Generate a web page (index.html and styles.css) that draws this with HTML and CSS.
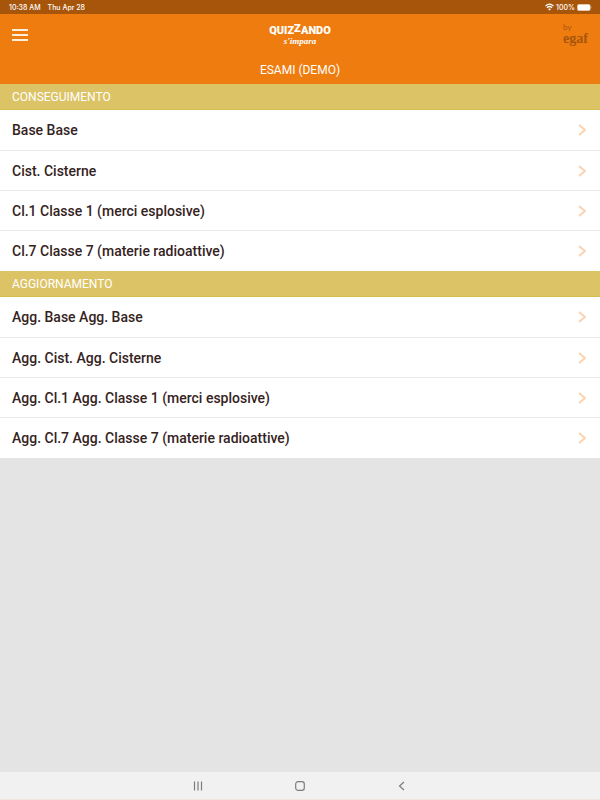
FILE: index.html
```
<!DOCTYPE html>
<html lang="it">
<head>
    <meta charset="UTF-8">
    <meta name="viewport" content="width=device-width, initial-scale=1.0">
    <title>Quizzando - Esami</title>
    <link rel="stylesheet" href="styles.css">
</head>
<body>
    <div class="status-bar">
        <div class="status-group">
            <span>10:38 AM</span>
            <span>Thu Apr 28</span>
        </div>
        <div class="status-icons">
            <svg width="9" height="8" viewBox="0 0 18 16" fill="none" stroke="#fff" stroke-width="2.6">
                <path d="M1 6.2Q9-1.6 17 6.2M4 9.6Q9 4.6 14 9.6"/>
                <path d="M9 15l-3-3q3-2.4 6 0z" fill="#fff" stroke="none"/>
            </svg>
            <span>100%</span>
            <svg width="15" height="7" viewBox="0 0 15 7">
                <rect x="0.3" y="0.3" width="13" height="6.4" rx="1.8" fill="#fff" stroke="#e0b98f" stroke-width="0.6"/>
                <path d="M14 2.3q1 1.2 0 2.4z" fill="#e0b98f"/>
            </svg>
        </div>
    </div>

    <header class="header">
        <div class="toolbar">
            <button type="button" class="menu-btn" aria-label="Menu">
                <span></span>
                <span></span>
                <span></span>
            </button>
            <div class="logo">
                <span class="logo-name">QUIZ<span class="logo-z">Z</span>ANDO</span>
                <span class="logo-tag">s'impara</span>
            </div>
            <div class="brand">
                <span class="brand-by">by</span>
                <span class="brand-name">egaf</span>
            </div>
        </div>
        <h1 class="title">ESAMI (DEMO)</h1>
    </header>

    <main class="content">
        <h2 class="section-title">CONSEGUIMENTO</h2>
        <ul class="list">
            <li><a href="#">Base Base <svg class="arrow" viewBox="0 0 8 12"><path d="M1 1l6 5-6 5"/></svg></a></li>
            <li><a href="#">Cist. Cisterne <svg class="arrow" viewBox="0 0 8 12"><path d="M1 1l6 5-6 5"/></svg></a></li>
            <li><a href="#">Cl.1 Classe 1 (merci esplosive) <svg class="arrow" viewBox="0 0 8 12"><path d="M1 1l6 5-6 5"/></svg></a></li>
            <li><a href="#">Cl.7 Classe 7 (materie radioattive) <svg class="arrow" viewBox="0 0 8 12"><path d="M1 1l6 5-6 5"/></svg></a></li>
        </ul>

        <h2 class="section-title">AGGIORNAMENTO</h2>
        <ul class="list">
            <li><a href="#">Agg. Base Agg. Base <svg class="arrow" viewBox="0 0 8 12"><path d="M1 1l6 5-6 5"/></svg></a></li>
            <li><a href="#">Agg. Cist. Agg. Cisterne <svg class="arrow" viewBox="0 0 8 12"><path d="M1 1l6 5-6 5"/></svg></a></li>
            <li><a href="#">Agg. Cl.1 Agg. Classe 1 (merci esplosive) <svg class="arrow" viewBox="0 0 8 12"><path d="M1 1l6 5-6 5"/></svg></a></li>
            <li><a href="#">Agg. Cl.7 Agg. Classe 7 (materie radioattive) <svg class="arrow" viewBox="0 0 8 12"><path d="M1 1l6 5-6 5"/></svg></a></li>
        </ul>
    </main>

    <nav class="nav-bar">
        <button type="button" aria-label="Recenti">
            <svg width="10" height="10" viewBox="0 0 10 10"><path d="M1.5 0.5v9M5 0.5v9M8.5 0.5v9"/></svg>
        </button>
        <button type="button" aria-label="Home">
            <svg width="10" height="10" viewBox="0 0 10 10"><rect x="0.7" y="0.7" width="8.6" height="8.6" rx="2.4"/></svg>
        </button>
        <button type="button" aria-label="Indietro">
            <svg width="10" height="10" viewBox="0 0 10 10"><path d="M7 1L2.5 5 7 9"/></svg>
        </button>
    </nav>
</body>
</html>
```

FILE: styles.css
```
* {
    box-sizing: border-box;
}

body {
    display: flex;
    flex-direction: column;
    min-height: 100vh;
    margin: 0;
    background-color: #e4e4e4;
    font-family: Roboto, "Liberation Sans", sans-serif;
}

button {
    padding: 0;
    border: 0;
    background: none;
    cursor: pointer;
}

/* status bar */
.status-bar {
    display: flex;
    align-items: center;
    justify-content: space-between;
    height: 14px;
    padding: 0 8px 0 9px;
    background-color: #a7550b;
    color: #fff;
    font-family: Inter, sans-serif;
    font-size: 7px;
    font-weight: 500;
}

.status-group {
    display: flex;
    gap: 7px;
}

.status-icons {
    display: flex;
    align-items: center;
    gap: 2px;
}

/* header */
.header {
    background-color: #ef7c0f;
    color: #fff;
}

.toolbar {
    display: grid;
    grid-template-columns: 1fr auto 1fr;
    align-items: center;
    height: 42px;
    padding: 0 12px;
}

.menu-btn {
    display: flex;
    flex-direction: column;
    justify-content: space-between;
    width: 16px;
    height: 12px;
}

.menu-btn span {
    height: 2px;
    background-color: #fdeedd;
}

.logo {
    display: flex;
    flex-direction: column;
    align-items: center;
}

.logo-name {
    font-size: 11px;
    font-weight: 900;
    line-height: 12px;
}

.logo-z {
    position: relative;
    top: -2px;
}

.logo-tag {
    font-family: "Liberation Serif", serif;
    font-size: 9px;
    font-style: italic;
    font-weight: bold;
    line-height: 8px;
}

.brand {
    display: flex;
    flex-direction: column;
    justify-self: end;
    color: #a7550b;
    font-family: "Liberation Serif", serif;
}

.brand-by {
    font-family: Lato, sans-serif;
    font-size: 8px;
    line-height: 8px;
}

.brand-name {
    font-size: 14px;
    font-weight: bold;
    line-height: 16px;
}

.title {
    margin: 0;
    font-size: 12px;
    font-weight: 400;
    line-height: 28px;
    text-align: center;
}

/* exam lists */
.content {
    flex: 1;
}

.section-title {
    margin: 0;
    padding: 1px 12px 0;
    border-bottom: 1px solid #d6bd4c;
    background-color: #dcc366;
    color: #fff;
    font-size: 12px;
    font-weight: 400;
    line-height: 24px;
}

.list {
    margin: 0;
    padding: 0 0 1px;
    background-color: #fff;
    list-style: none;
}

.list li + li {
    border-top: 1px solid #e9e9e9;
}

.list li {
    height: 40px;
}

.list a {
    display: flex;
    align-items: center;
    justify-content: space-between;
    height: 100%;
    padding: 0 14px 0 12px;
    color: #35231e;
    font-size: 14px;
    font-weight: 500;
    text-decoration: none;
}

.arrow {
    width: 8px;
    height: 12px;
    fill: none;
    stroke: #fad3b0;
    stroke-width: 2;
}

/* bottom navigation */
.nav-bar {
    display: flex;
    justify-content: center;
    gap: 92px;
    height: 28px;
    border-bottom: 1px solid #efe4dc;
    background-color: #f1f1f1;
}

.nav-bar svg {
    display: block;
    fill: none;
    stroke: #7d7d7d;
    stroke-width: 1.2;
}
```
